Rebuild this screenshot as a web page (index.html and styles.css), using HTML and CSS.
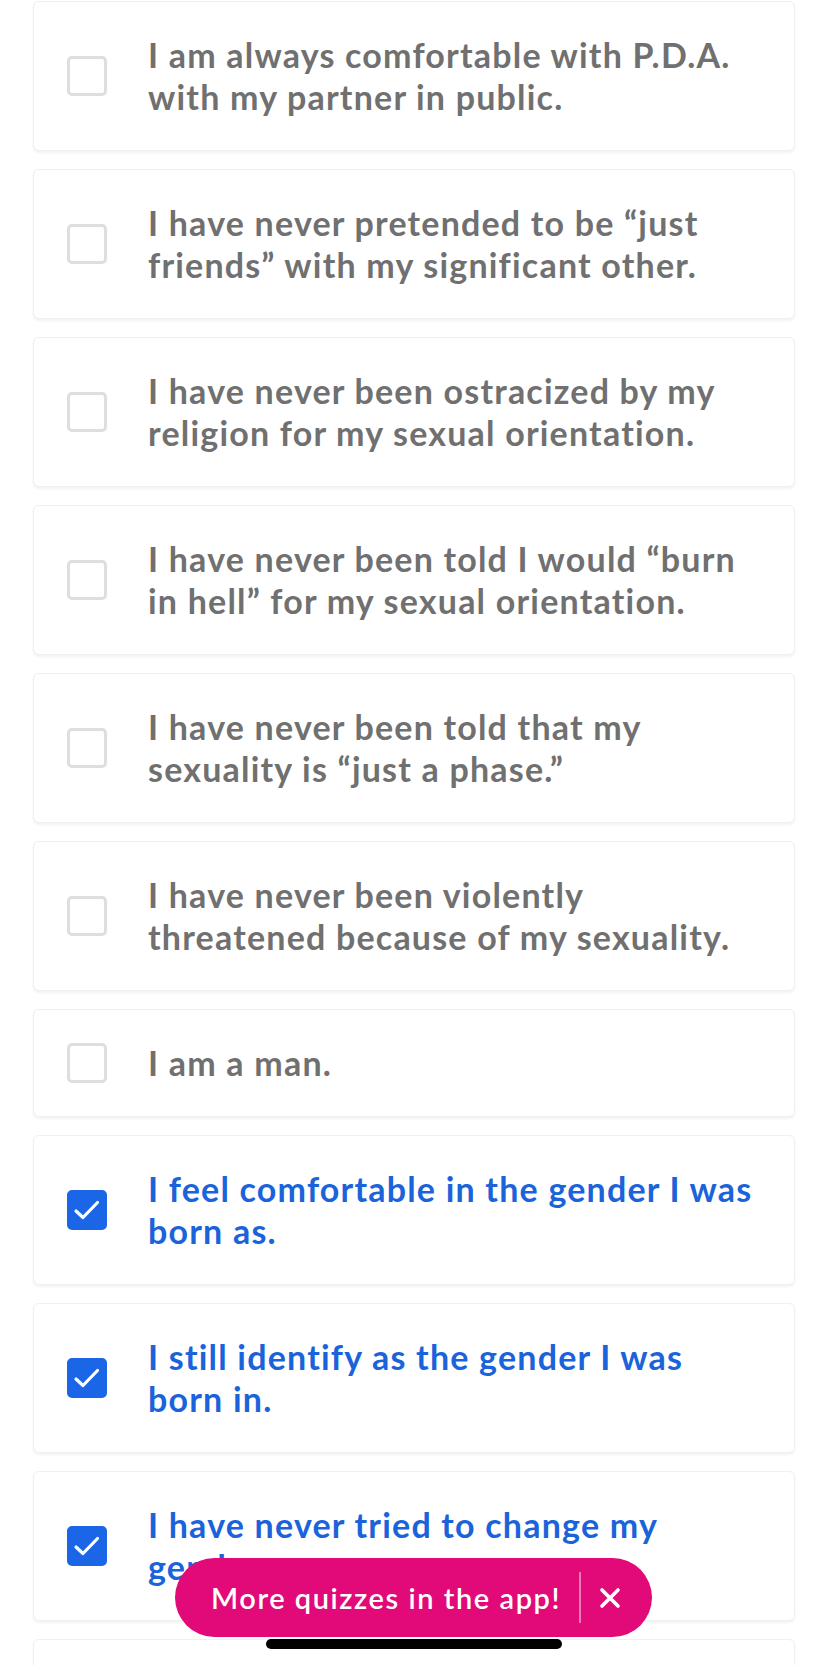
FILE: index.html
```html
<!DOCTYPE html>
<html lang="en">
<head>
<meta charset="utf-8">
<title>Quiz</title>
<link rel="stylesheet" href="styles.css">
</head>
<body>
<main class="list">
  <div class="card"><span class="box"></span><p class="label">I am always comfortable with P.D.A.<br>with my partner in public.</p></div>
  <div class="card"><span class="box"></span><p class="label">I have never pretended to be “just<br>friends” with my significant other.</p></div>
  <div class="card"><span class="box"></span><p class="label">I have never been ostracized by my<br>religion for my sexual orientation.</p></div>
  <div class="card"><span class="box"></span><p class="label">I have never been told I would “burn<br>in hell” for my sexual orientation.</p></div>
  <div class="card"><span class="box"></span><p class="label">I have never been told that my<br>sexuality is “just a phase.”</p></div>
  <div class="card"><span class="box"></span><p class="label">I have never been violently<br>threatened because of my sexuality.</p></div>
  <div class="card"><span class="box"></span><p class="label">I am a man.</p></div>
  <div class="card checked"><span class="box"><svg viewBox="0 0 40 40" width="40" height="40"><polyline points="9,21 16,27.5 30.5,12.5" fill="none" stroke="#fff" stroke-width="3.2" stroke-linecap="round" stroke-linejoin="round"/></svg></span><p class="label">I feel comfortable in the gender I was<br>born as.</p></div>
  <div class="card checked"><span class="box"><svg viewBox="0 0 40 40" width="40" height="40"><polyline points="9,21 16,27.5 30.5,12.5" fill="none" stroke="#fff" stroke-width="3.2" stroke-linecap="round" stroke-linejoin="round"/></svg></span><p class="label">I still identify as the gender I was<br>born in.</p></div>
  <div class="card checked"><span class="box"><svg viewBox="0 0 40 40" width="40" height="40"><polyline points="9,21 16,27.5 30.5,12.5" fill="none" stroke="#fff" stroke-width="3.2" stroke-linecap="round" stroke-linejoin="round"/></svg></span><p class="label">I have never tried to change my<br>gender.</p></div>
  <div class="card card-peek"></div>
</main>
<div class="promo">
  <span class="promo-text">More quizzes in the app!</span>
  <span class="promo-sep"></span>
  <svg class="promo-close" viewBox="0 0 22 22" width="22" height="22"><path d="M3 3 L19 19 M19 3 L3 19" stroke="#fff" stroke-width="3.6" stroke-linecap="round"/></svg>
</div>
<div class="home-indicator"></div>
</body>
</html>
```
FILE: styles.css
```css
html, body {
  margin: 0;
  padding: 0;
  background: #ffffff;
}
body {
  width: 828px;
  height: 1665px;
  overflow: hidden;
  position: relative;
  font-family: "Lato", "Liberation Sans", sans-serif;
}
.list {
  display: flex;
  flex-direction: column;
  gap: 18px;
  padding: 1px 33px 0;
}
.card {
  display: flex;
  align-items: center;
  gap: 41px;
  padding: 32px 20px 32px 33px;
  background: #fff;
  border: 1px solid #f0f0f0;
  border-radius: 6px;
  box-shadow: 0 2px 3px rgba(0, 0, 0, 0.05);
  box-sizing: border-box;
}
.card-peek {
  height: 108px;
}
.box {
  flex: 0 0 auto;
  width: 40px;
  height: 40px;
  box-sizing: border-box;
  border: 3px solid #dedede;
  border-radius: 5px;
  display: flex;
  align-items: center;
  justify-content: center;
}
.card.checked .box {
  background: #1a66e6;
  border-color: #1a66e6;
}
.box svg {
  display: block;
  flex: 0 0 auto;
}
.label {
  margin: 0;
  font-size: 34px;
  line-height: 42px;
  font-weight: 700;
  letter-spacing: 1.2px;
  font-variant-ligatures: none;
  color: #707070;
  white-space: nowrap;
}
.card.checked .label {
  color: #1b63da;
}
.promo {
  position: absolute;
  left: 175px;
  top: 1558px;
  width: 477px;
  height: 79px;
  box-sizing: border-box;
  border-radius: 40px;
  background: #e20a78;
  display: flex;
  align-items: center;
  padding-left: 36px;
  color: #fff;
}
.promo-text {
  font-size: 29px;
  font-weight: 600;
  letter-spacing: 1.55px;
}
.promo-sep {
  width: 2px;
  height: 51px;
  background: rgba(255, 255, 255, 0.45);
  margin-left: 18px;
  margin-right: 18px;
}
.promo-close {
  display: block;
}
.home-indicator {
  position: absolute;
  left: 266px;
  top: 1639px;
  width: 296px;
  height: 10px;
  border-radius: 5px;
  background: #000;
}
```
